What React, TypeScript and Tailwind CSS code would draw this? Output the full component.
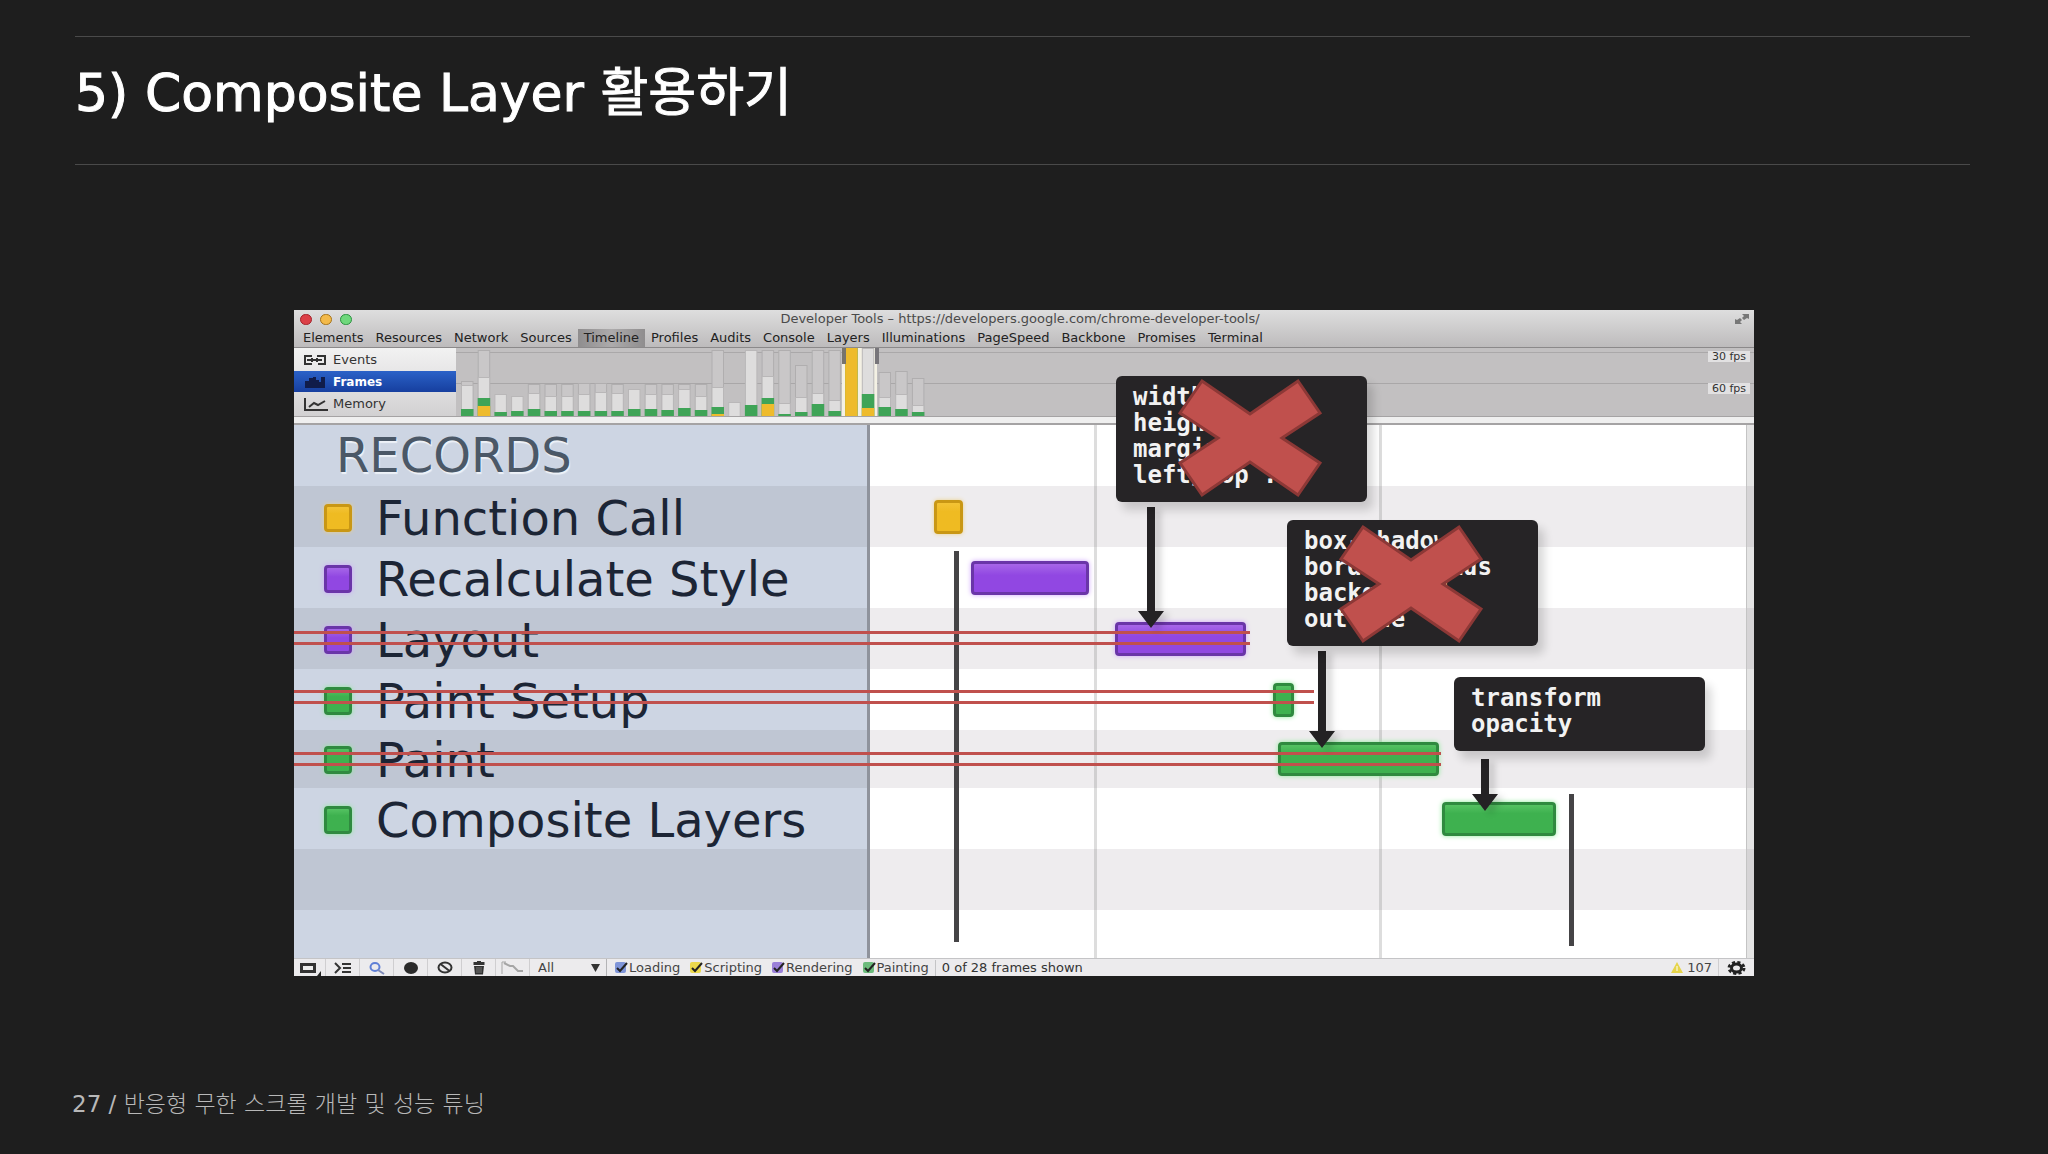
import type { ReactNode } from "react";
import clsx from "clsx";

const TABS = [
  "Elements", "Resources", "Network", "Sources", "Timeline", "Profiles", "Audits",
  "Console", "Layers", "Illuminations", "PageSpeed", "Backbone", "Promises", "Terminal",
];

// tops are measured down from the upper edge of the 68px high strip
type Frame = { outline?: number; light: number; green: number; yellow?: number };

const FRAMES: Frame[] = [
  { outline: 33, light: 37, green: 61 },
  { outline: 2, light: 29, green: 50, yellow: 58 },
  { light: 46, green: 64 },
  { light: 48, green: 63 },
  { outline: 36, light: 45, green: 61 },
  { outline: 36, light: 48, green: 63 },
  { outline: 36, light: 48, green: 63 },
  { outline: 35, light: 46, green: 63 },
  { outline: 35, light: 44, green: 63 },
  { outline: 36, light: 45, green: 63 },
  { light: 41, green: 61 },
  { outline: 36, light: 46, green: 61 },
  { outline: 36, light: 46, green: 62 },
  { outline: 36, light: 41, green: 60 },
  { outline: 36, light: 48, green: 62 },
  { outline: 2, light: 39, green: 59, yellow: 66 },
  { light: 54, green: 68 },
  { light: 2, green: 57 },
  { outline: 2, light: 28, green: 50, yellow: 56 },
  { outline: 2, light: 55, green: 66 },
  { outline: 17, light: 49, green: 64 },
  { outline: 2, light: 45, green: 56 },
  { outline: 2, light: 52, green: 63 },
  { light: 0, green: 0, yellow: 0 },
  { light: 0, green: 46, yellow: 60 },
  { outline: 24, light: 49, green: 59 },
  { outline: 23, light: 46, green: 61 },
  { outline: 30, light: 57, green: 64 },
];

const GREEN = "border-[#2f8a3f] from-[#54c262] to-[#3eb14f] to-30% shadow-[0_0_5px_#8fec9a]";
const PURPLE = "border-[#6a35a8] from-[#a765e8] to-[#9147e2] to-40% shadow-[0_0_5px_#cfa4ff]";
const YELLOW = "border-[#c99714] from-[#f3c335] to-[#efbb22] to-30% shadow-[0_0_4px_#ecd28a]";

const ROWS = [
  { label: "Function Call", color: YELLOW, bar: "ml-[64px] w-[29px]", height: "h-[61px]" },
  { label: "Recalculate Style", color: PURPLE, bar: "ml-[101px] w-[118px]", height: "h-[61px]" },
  { label: "Layout", color: PURPLE, bar: "ml-[245px] w-[131px]", height: "h-[61px]" },
  { label: "Paint Setup", color: GREEN, bar: "ml-[403px] w-[21px]", height: "h-[61px]" },
  { label: "Paint", color: GREEN, bar: "ml-[408px] w-[161px]", height: "h-[58px]" },
  { label: "Composite Layers", color: GREEN, bar: "ml-[572px] w-[114px]", height: "h-[61px]" },
];

const FILTERS = [
  { label: "Loading", color: "bg-[#7f95d8]" },
  { label: "Scripting", color: "bg-[#ecd94c]" },
  { label: "Rendering", color: "bg-[#9a80d8]" },
  { label: "Painting", color: "bg-[#6cbb7c]" },
];

function Overview() {
  return (
    <div className="relative h-[68px] flex-1 overflow-hidden bg-[#c2c0c1]">
      <div className="absolute inset-x-0 top-1 h-px bg-[#aaa8a9]" />
      <div className="absolute inset-x-0 top-[35px] h-px bg-[#a9a7a8]" />
      <svg className="relative block" width="500" height="68" aria-hidden="true">
        <rect x="386" y="0" width="35" height="68" fill="#f4f1e4" />
        {FRAMES.map((f, i) => {
          const x = 5 + i * 16.7;
          return (
            <g key={i}>
              {f.outline !== undefined && (
                <rect x={x + 0.5} y={f.outline + 0.5} width="11.5" height={68 - f.outline} fill="#c9c7c8" stroke="#b0aeaf" />
              )}
              <rect x={x + 0.5} y={f.light + 0.5} width="11.5" height={68 - f.light} fill="#dedddd" stroke="#b9b7b8" />
              <rect x={x} y={f.green} width="12.5" height={68 - f.green} fill="#3fa457" />
              {f.yellow !== undefined && (
                <rect x={x} y={f.yellow} width="12.5" height={68 - f.yellow} fill="#eebb2c" />
              )}
            </g>
          );
        })}
        <rect x="386" y="0" width="4" height="16" fill="#77746c" />
        <rect x="419" y="0" width="4" height="16" fill="#77757a" />
      </svg>
      <span className="absolute right-1 top-[3px] bg-[#e2e1e2] px-1 text-[11px] leading-[11px] text-[#333]">30 fps</span>
      <span className="absolute right-1 top-[35px] bg-[#e2e1e2] px-1 text-[11px] leading-[11px] text-[#333]">60 fps</span>
    </div>
  );
}

function Callout({ lines, className }: { lines: string[]; className: string }) {
  return (
    <div
      className={clsx(
        "absolute w-[251px] rounded-md bg-[#262426] px-[17px] pt-2 pb-3.5 font-[DejaVu_Sans_Mono,monospace] text-2xl leading-[26px] font-bold text-[#f2f2f2] shadow-[6px_8px_10px_rgba(0,0,0,0.16)]",
        className
      )}
    >
      {lines.map((l) => (
        <div key={l} className="whitespace-nowrap">{l}</div>
      ))}
    </div>
  );
}

function Cross({ className }: { className: string }) {
  return (
    <svg className={clsx("absolute", className)} width="146" height="120" viewBox="-73 -60 146 120" aria-hidden="true">
      <path
        d="M-48-57 0-24 48-57 70-25 32 0 70 25 48 57 0 24-48 57-70 25-32 0-70-25Z"
        fill="#c0504d"
        stroke="#8c3836"
        strokeWidth="3"
      />
    </svg>
  );
}

function Arrow({ length, className }: { length: number; className: string }) {
  return (
    <svg className={clsx("absolute drop-shadow-[6px_3px_3px_rgba(0,0,0,0.15)]", className)} width="26" height={length} aria-hidden="true">
      <path d={`M9 0H17V${length - 17}H26L13 ${length} 0 ${length - 17}H9Z`} fill="#242224" />
    </svg>
  );
}

function Strike({ className }: { className: string }) {
  return <div className={clsx("absolute left-0 h-[14px] border-y-3 border-[#c0504d]", className)} />;
}

function Tool({ label, className, children }: { label: string; className?: string; children: ReactNode }) {
  return (
    <button aria-label={label} className={clsx("flex h-full items-center justify-center border-r border-[#cfced0]", className ?? "w-[34px]")}>
      {children}
    </button>
  );
}

function StatusBar() {
  return (
    <div className="flex h-[18px] items-center overflow-hidden border-t border-[#c4c4c6] bg-[#ecebed] text-[13px] leading-4 text-[#444]">
      <Tool label="Dock" className="w-8">
        <svg width="22" height="16">
          <path d="M1 3H17V13H1Z" fill="#333" />
          <path d="M4 6H14V10H4Z" fill="#eee" />
          <path d="M22 11V16H18Z" fill="#222" />
        </svg>
      </Tool>
      <Tool label="Show console">
        <svg width="18" height="14" fill="none" stroke="#333" strokeWidth="2">
          <path d="M1 2 6 7 1 12M8 3H17M9 7H17M8 11H17" />
        </svg>
      </Tool>
      <Tool label="Search">
        <svg width="16" height="14" fill="none" stroke="#5f7fd6" strokeWidth="2">
          <ellipse cx="6" cy="6" rx="4.5" ry="4" />
          <path d="M9 9 15 13" stroke="#7c89b8" />
        </svg>
      </Tool>
      <Tool label="Record">
        <svg width="14" height="12"><ellipse cx="7" cy="6" rx="7" ry="6" fill="#2a2a2a" /></svg>
      </Tool>
      <Tool label="Clear">
        <svg width="16" height="13" fill="none" stroke="#333" strokeWidth="2">
          <ellipse cx="8" cy="6.5" rx="6.5" ry="5" />
          <path d="M3.5 3 12.5 10" />
        </svg>
      </Tool>
      <Tool label="Collect garbage">
        <svg width="12" height="14" fill="#333">
          <path d="M4 0H8V1H11.5V4H.5V1H4ZM1 5H11L10 13.5H2Z" />
          <path d="M4 6V12M6 6V12M8 6V12" stroke="#777" />
        </svg>
      </Tool>
      <Tool label="Glue async events">
        <svg width="23" height="14" fill="none" stroke="#a5a5a5">
          <path d="M1 13V1H5" />
          <path d="M3 2 9 5H12L17 10H22" strokeWidth="2" />
        </svg>
      </Tool>
      <div className="relative flex h-full w-[77px] items-center border-r border-[#b4b4b6]">
        <select aria-label="Duration filter" className="w-full appearance-none bg-transparent pl-2 text-[13px] leading-4">
          <option>All</option>
        </select>
        <svg className="pointer-events-none absolute right-1.5" width="9" height="8"><path d="M0 0H9L4.5 8Z" fill="#333" /></svg>
      </div>
      <div className="flex items-center gap-2.5 pl-2">
        {FILTERS.map((f) => (
          <label key={f.label} className="relative flex items-center gap-[3px]">
            <input type="checkbox" defaultChecked className={clsx("size-[11px] appearance-none rounded-xs", f.color)} />
            <svg className="pointer-events-none absolute left-0" width="14" height="12" fill="none" stroke="#222" strokeWidth="2">
              <path d="M2 6 5 9 12 1" />
            </svg>
            {f.label}
          </label>
        ))}
      </div>
      <span className="ml-1.5 border-l border-[#c4c4c6] pl-1.5 text-[#333]">0 of 28 frames shown</span>
      <span className="ml-auto flex items-center gap-1 pr-1.5">
        <svg width="12" height="11"><path d="M6 0 12 11H0Z" fill="#e6d44a" /><path d="M6 4V9" stroke="#fff" /></svg>
        107
      </span>
      <button aria-label="Settings" className="flex h-full w-9 items-center justify-center border-l border-[#cfced0]">
        <svg width="19" height="14" viewBox="-9.5 -7 19 14" fill="none" stroke="#222">
          <ellipse rx="5" ry="4" strokeWidth="3" />
          <ellipse rx="7.5" ry="5.5" strokeWidth="3" strokeDasharray="3 2.2" />
        </svg>
      </button>
    </div>
  );
}

function DevTools() {
  return (
    <section className="bg-white font-[DejaVu_Sans,sans-serif]">
      <div className="border-b border-[#8b898a] bg-linear-to-b from-[#dedede] to-[#bdbbbc] text-[13px] leading-4 text-[#222]">
        <div className="relative flex h-[18px] items-center px-1.5">
          <div className="flex gap-2">
            <span className="h-[11px] w-3 rounded-full border border-[#a32129] bg-[#dc4048]" />
            <span className="h-[11px] w-3 rounded-full border border-[#a5731a] bg-[#f3ba4a]" />
            <span className="h-[11px] w-3 rounded-full border border-[#2b9140] bg-[#6fd87c]" />
          </div>
          <h2 className="flex-1 pr-[60px] text-center text-[#4a4a4a]">
            Developer Tools – https://developers.google.com/chrome-developer-tools/
          </h2>
          <svg className="absolute right-1" width="16" height="12" fill="#777">
            <path d="M8 1H15V6L13 5 10 7 8 5 10 3ZM1 11V6L3 7 6 5 8 7 6 9 8 11Z" />
          </svg>
        </div>
        <nav className="flex h-[19px] items-center gap-3 pl-[9px]">
          {TABS.map((t) => (
            <button
              key={t}
              className={clsx("leading-[18px]", t === "Timeline" && "-mx-1.5 bg-linear-to-r from-[#8f8d8e] via-[#adabac] to-[#8f8d8e] px-1.5")}
            >
              {t}
            </button>
          ))}
        </nav>
      </div>

      <div className="flex">
        <ul className="w-[162px] bg-linear-to-b from-[#f2f2f2] to-[#d2d1d2] text-[13px] leading-4 text-[#333]">
          <li className="flex h-[23px] items-center gap-[7px] pl-2.5">
            <svg width="22" height="10" fill="none" stroke="#333" strokeWidth="2">
              <path d="M0 1H8M0 9H8M1 2V8M13 1H22M14 9H22M21 2V8M8 3V7M13 3V7M3 5H7M9 5H18" />
            </svg>
            Events
          </li>
          <li className="flex h-[21px] items-center gap-[7px] bg-linear-to-b from-[#2b62c8] to-[#173f9f] pl-2.5 text-xs font-bold text-white">
            <svg width="22" height="12" fill="#101c4a"><path d="M1 5H5V2H9V1H12V4H15V6H17V1H21V12H1Z" /></svg>
            Frames
          </li>
          <li className="flex h-[24px] items-center gap-[5px] pl-2.5">
            <svg width="24" height="13" fill="none" stroke="#333" strokeWidth="2"><path d="M1 0V12H24M5 9 10 5 14 7 21 3" /></svg>
            Memory
          </li>
        </ul>
        <Overview />
      </div>
      <div className="h-[9px] border-y border-[#a5a3a4] border-b-2 bg-[#efefef]" />

      <div className="relative flex">
        <div className="w-[576px] border-r-3 border-[#8f939c] bg-[#cdd5e3] text-5xl text-[#1c2535]">
          <h3 className="h-[61px] pl-[42px] leading-[60px] text-[#4b5867] [text-shadow:1px_2px_1px_#eef2f8]">RECORDS</h3>
          <ul>
            {ROWS.map((r, i) => (
              <li key={r.label} className={clsx("flex items-center pt-0.5 pl-[30px]", r.height, i % 2 === 0 && "bg-[#bfc6d3]")}>
                <span className={clsx("size-[28px] rounded-sm border-3 bg-linear-to-b", r.color)} />
                <span className="pl-6 leading-[56px] whitespace-nowrap">{r.label}</span>
              </li>
            ))}
          </ul>
          <div className="h-[61px] bg-[#bfc6d3]" />
          <div className="h-[48px]" />
        </div>

        <div className="relative flex-1 bg-white">
          <div className="h-[61px]" />
          {ROWS.map((r, i) => (
            <div key={r.label} className={clsx("flex items-center", r.height, i % 2 === 0 && "bg-[#eeecee]")}>
              <div className={clsx("relative z-10 h-[34px] rounded-sm border-3 bg-linear-to-b", r.bar, r.color)} />
            </div>
          ))}
          <div className="h-[61px] bg-[#eeecee]" />
          <div className="h-[48px]" />

          {/* grid lines and frame markers */}
          <div className="absolute inset-y-0 left-[224px] w-[3px] bg-[#777]/25" />
          <div className="absolute inset-y-0 left-[509px] w-[3px] bg-[#777]/25" />
          <div className="absolute inset-y-0 right-0 w-2 border-l border-[#c4c4c4] bg-[#777]/20" />
          <div className="absolute top-[126px] left-[84px] h-[391px] w-[5px] bg-[#454446]" />
          <div className="absolute top-[369px] left-[699px] h-[152px] w-[5px] bg-[#454446]" />
        </div>

        <Strike className="top-[206px] z-20 w-[956px]" />
        <Strike className="top-[265px] z-20 w-[1020px]" />
        <Strike className="top-[327px] z-20 w-[1147px]" />

        <div className="absolute top-0 left-[576px] z-20">
          <Arrow length={121} className="top-[82px] left-[268px]" />
          <Arrow length={97} className="top-[226px] left-[439px]" />
          <Arrow length={52} className="top-[334px] left-[602px]" />
          <Callout lines={["width", "height", "margin", "left/top ..."]} className="-top-[49px] left-[246px]" />
          <Callout lines={["box-shadow", "border-radius", "background", "outline"]} className="top-[95px] left-[417px]" />
          <Callout lines={["transform", "opacity"]} className="top-[252px] left-[584px]" />
          <Cross className="-top-[47px] left-[307px]" />
          <Cross className="top-[99px] left-[468px]" />
        </div>
      </div>
      <StatusBar />
    </section>
  );
}

export default function App() {
  return (
    <main className="flex min-h-screen flex-col bg-[#1e1e1e] pt-9 font-[DejaVu_Sans,'Noto_Sans_CJK_KR',sans-serif]">
      <header className="mr-[78px] ml-[75px] flex h-[129px] items-center border-y border-[#4a4a4a] pb-4">
        <h1 className="text-[52px] leading-[64px] text-white [-webkit-text-stroke:1px_white]">5) Composite Layer 활용하기</h1>
      </header>
      <div className="px-[294px] pt-[145px]">
        <DevTools />
      </div>
      <footer className="mt-auto pb-[34px] pl-[72px] text-[23px] leading-8 text-[#b8b8b8]">
        27 / <span className="font-light">반응형 무한 스크롤 개발 및 성능 튜닝</span>
      </footer>
    </main>
  );
}
